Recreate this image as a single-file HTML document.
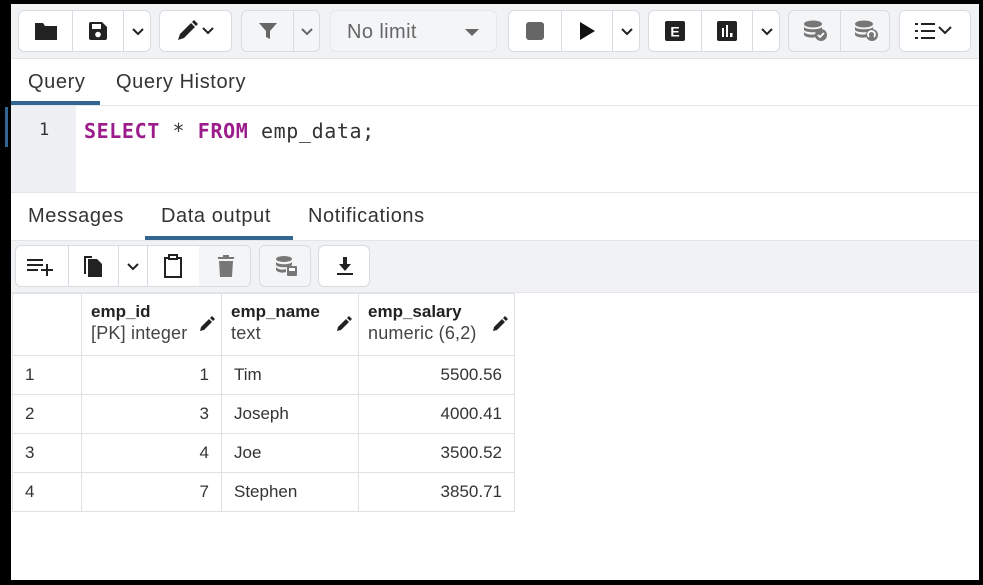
<!DOCTYPE html>
<html><head><meta charset="utf-8"><style>
*{box-sizing:border-box;margin:0;padding:0}
body{width:983px;height:585px;background:#000;position:relative;overflow:hidden;font-family:"Liberation Sans",sans-serif;color:#222}
#app{position:absolute;left:11px;top:4px;width:968px;height:576px;background:#fff}
.abs{position:absolute}
.tb{position:absolute;left:0;top:0;width:968px;height:55px;background:#f1f2f4;border-bottom:1px solid #e2e4e8}
.grp{position:absolute;top:6px;height:42px;border:1px solid #d8dbe0;border-radius:6px;background:#fff;overflow:hidden}
.grp.dis{background:#f4f5f7}
.div{position:absolute;top:0;width:1px;height:100%;background:#d8dbe0}
.ic{position:absolute;top:0;height:100%;display:flex;align-items:center;justify-content:center}
.tab{position:absolute;font-size:20px;color:#333;letter-spacing:0.6px}
td,th{border:1px solid #dfe1e5}
table{border-collapse:collapse;position:absolute;left:1px;top:289px;font-size:17px;color:#333}
th{font-weight:normal;text-align:left;vertical-align:top;height:62px;padding:8px 9px 0;position:relative;background:#fff}
th b{font-weight:bold;font-size:17px;color:#222}
th span{display:block;font-size:18px;color:#444;margin-top:1px;letter-spacing:0.2px}
td{height:39px;padding:0 12px}
.pen{position:absolute;right:6px;top:22px}
</style></head><body><div id="app">
<div class="tb">
 <div class="grp" style="left:7px;width:133px">
  <div class="ic" style="left:0;width:53px"><svg width="24" height="20" viewBox="0 0 24 20"><path d="M1 2h8l2 3h12v14H1z" fill="#222"/></svg></div>
  <div class="div" style="left:53px"></div>
  <div class="ic" style="left:53px;width:51px"><svg width="20" height="20" viewBox="0 0 20 20"><path d="M1 3a2 2 0 0 1 2-2h11l5 5v11a2 2 0 0 1-2 2H3a2 2 0 0 1-2-2z" fill="#222"/><rect x="4" y="3" width="9" height="5" fill="#fff"/><circle cx="10" cy="13.5" r="2.8" fill="#fff"/></svg></div>
  <div class="div" style="left:104px"></div>
  <div class="ic" style="left:104px;width:29px"><svg width="14" height="9" viewBox="0 0 14 9"><path d="M2 2l5 5 5-5" stroke="#222" stroke-width="2" fill="none"/></svg></div>
 </div>
 <div class="grp" style="left:148px;width:73px">
  <div class="ic" style="left:0;width:73px"><svg width="44" height="22" viewBox="0 0 44 22"><path d="M3 20l2-6 11-11 4 4-11 11z" fill="#222"/><path d="M17 2l2-2 4 4-2 2z" fill="#222"/><path d="M28 8l5 5 5-5" stroke="#222" stroke-width="2" fill="none"/></svg></div>
 </div>
 <div class="grp dis" style="left:230px;width:79px">
  <div class="ic" style="left:0;width:51px"><svg width="20" height="20" viewBox="0 0 20 20"><path d="M1 2h18l-7 8v8l-4-2v-6z" fill="#666"/></svg></div>
  <div class="div" style="left:51px"></div>
  <div class="ic" style="left:51px;width:28px"><svg width="14" height="9" viewBox="0 0 14 9"><path d="M2 2l5 5 5-5" stroke="#666" stroke-width="2" fill="none"/></svg></div>
 </div>
 <div class="grp dis" style="left:319px;width:167px;border-color:#e6e8eb">
  <div class="abs" style="left:16px;top:10px;font-size:20px;color:#666;letter-spacing:0.4px">No limit</div>
  <div class="abs" style="left:134px;top:18px;width:0;height:0;border-left:7px solid transparent;border-right:7px solid transparent;border-top:7px solid #666"></div>
 </div>
 <div class="grp" style="left:497px;width:132px">
  <div class="ic" style="left:0;width:52px"><div style="width:18px;height:18px;background:#666;border-radius:3px"></div></div>
  <div class="div" style="left:52px"></div>
  <div class="ic" style="left:52px;width:51px"><svg width="18" height="20" viewBox="0 0 18 20"><path d="M2 1l15 9-15 9z" fill="#111"/></svg></div>
  <div class="div" style="left:103px"></div>
  <div class="ic" style="left:103px;width:29px"><svg width="14" height="9" viewBox="0 0 14 9"><path d="M2 2l5 5 5-5" stroke="#222" stroke-width="2" fill="none"/></svg></div>
 </div>
 <div class="grp" style="left:637px;width:132px">
  <div class="ic" style="left:0;width:52px"><svg width="20" height="20" viewBox="0 0 20 20"><rect width="20" height="20" rx="2" fill="#222"/><text x="10" y="15.5" font-size="14" font-weight="bold" fill="#fff" text-anchor="middle" font-family="Liberation Sans">E</text></svg></div>
  <div class="div" style="left:52px"></div>
  <div class="ic" style="left:52px;width:51px"><svg width="20" height="20" viewBox="0 0 20 20"><rect width="20" height="20" rx="2" fill="#222"/><rect x="5" y="7" width="2" height="9" fill="#fff"/><rect x="9" y="4" width="2" height="12" fill="#fff"/><rect x="13" y="12" width="2.5" height="4" fill="#fff"/></svg></div>
  <div class="div" style="left:103px"></div>
  <div class="ic" style="left:103px;width:29px"><svg width="14" height="9" viewBox="0 0 14 9"><path d="M2 2l5 5 5-5" stroke="#222" stroke-width="2" fill="none"/></svg></div>
 </div>
 <div class="grp dis" style="left:777px;width:102px">
  <div class="ic" style="left:0;width:51px"><svg width="26" height="22" viewBox="0 0 26 22"><ellipse cx="11" cy="4" rx="9" ry="3.5" fill="#777"/><path d="M2 7c2 3 16 3 18 0v3c-2 3-16 3-18 0zM2 12c2 3 10 3 12 2v3c-2 1-10 1-12-2z" fill="#777"/><circle cx="19" cy="15" r="6" fill="#777"/><path d="M16 15l2 2 4-4" stroke="#fff" stroke-width="1.8" fill="none"/></svg></div>
  <div class="div" style="left:51px"></div>
  <div class="ic" style="left:51px;width:51px"><svg width="26" height="22" viewBox="0 0 26 22"><ellipse cx="11" cy="4" rx="9" ry="3.5" fill="#777"/><path d="M2 7c2 3 16 3 18 0v3c-2 3-16 3-18 0zM2 12c2 3 10 3 12 2v3c-2 1-10 1-12-2z" fill="#777"/><circle cx="19" cy="15" r="6" fill="#777"/><path d="M16 17a3.5 3.5 0 1 1 5 0" stroke="#fff" stroke-width="1.8" fill="none"/></svg></div>
 </div>
 <div class="grp" style="left:888px;width:72px">
  <div class="ic" style="left:0;width:72px"><svg width="42" height="20" viewBox="0 0 42 20"><g fill="#222"><rect x="0" y="2" width="3" height="2"/><rect x="0" y="9" width="3" height="2"/><rect x="0" y="16" width="3" height="2"/><rect x="6" y="2" width="14" height="2"/><rect x="6" y="9" width="14" height="2"/><rect x="6" y="16" width="14" height="2"/></g><path d="M24 6l6 6 6-6" stroke="#222" stroke-width="2" fill="none"/></svg></div>
 </div>
</div>
<div class="tab" style="left:17px;top:67px">Query</div>
<div class="tab" style="left:105px;top:67px">Query History</div>
<div class="abs" style="left:0;top:97px;width:89px;height:4px;background:#326690"></div>
<div class="abs" style="left:0;top:101px;width:968px;height:1px;background:#e3e5e8"></div>
<div class="abs" style="left:0;top:102px;width:65px;height:86px;background:#eef0f3"></div>
<div class="abs" style="left:-6px;top:103px;width:3px;height:40px;background:#326690"></div>
<div class="abs" style="left:28px;top:116px;font-family:'DejaVu Sans Mono',monospace;font-size:17px;color:#333">1</div>
<div class="abs" style="left:73px;top:115px;font-family:'DejaVu Sans Mono',monospace;font-size:20px;letter-spacing:0.6px;color:#333;white-space:pre"><span style="color:#9b1c8a;font-weight:bold">SELECT</span> * <span style="color:#9b1c8a;font-weight:bold">FROM</span> emp_data;</div>
<div class="abs" style="left:0;top:188px;width:968px;height:1px;background:#e3e5e8"></div>
<div class="tab" style="left:17px;top:201px">Messages</div>
<div class="tab" style="left:150px;top:201px">Data output</div>
<div class="tab" style="left:297px;top:201px">Notifications</div>
<div class="abs" style="left:134px;top:232px;width:148px;height:4px;background:#326690"></div>
<div class="abs" style="left:0;top:236px;width:968px;height:53px;background:#f1f2f4;border-top:1px solid #e3e5e8;border-bottom:1px solid #e3e5e8"></div>
<div class="grp" style="left:4px;top:241px;height:42px;width:236px">
 <div class="ic" style="left:0;width:52px"><svg width="30" height="20" viewBox="0 0 30 20"><g fill="#222"><rect x="0" y="3" width="16" height="2"/><rect x="0" y="8" width="16" height="2"/><rect x="0" y="13" width="11" height="2"/><rect x="14" y="13" width="12" height="2"/><rect x="19" y="8" width="2" height="12"/></g></svg></div>
 <div class="div" style="left:52px"></div>
 <div class="ic" style="left:52px;width:50px"><svg width="22" height="24" viewBox="0 0 22 24"><path d="M2 2h8v2H4v16H2z" fill="#222"/><path d="M6 5h9l5 5v13H6z" fill="#222"/></svg></div>
 <div class="div" style="left:102px"></div>
 <div class="ic" style="left:102px;width:29px"><svg width="14" height="9" viewBox="0 0 14 9"><path d="M2 2l5 5 5-5" stroke="#222" stroke-width="2" fill="none"/></svg></div>
 <div class="div" style="left:131px"></div>
 <div class="ic" style="left:131px;width:52px"><svg width="22" height="26" viewBox="0 0 22 26"><path d="M2 4h5v2H4v17h14V6h-3V4h5v21H2z" fill="#222"/><rect x="7" y="2" width="8" height="4" fill="none" stroke="#222" stroke-width="2"/></svg></div>
 <div class="div" style="left:183px"></div>
 <div class="ic" style="left:183px;width:53px;background:#f4f5f7"><svg width="16" height="22" viewBox="0 0 16 22"><rect x="0" y="2" width="16" height="2" fill="#777"/><rect x="5" y="0" width="6" height="2" fill="#777"/><path d="M1 6h14l-1 16H2z" fill="#777"/></svg></div>
</div>
<div class="grp dis" style="left:248px;top:241px;height:42px;width:52px">
 <div class="ic" style="left:0;width:52px"><svg width="24" height="22" viewBox="0 0 24 22"><ellipse cx="10" cy="4" rx="8" ry="3" fill="#777"/><path d="M2 7c2 3 14 3 16 0v3c-2 3-14 3-16 0zM2 12c2 3 8 3 10 2v3c-2 1-8 1-10-2z" fill="#777"/><rect x="13" y="11" width="10" height="10" rx="1" fill="#777"/><rect x="15" y="13" width="6" height="3" fill="#fff"/></svg></div>
</div>
<div class="grp" style="left:307px;top:241px;height:42px;width:52px">
 <div class="ic" style="left:0;width:52px"><svg width="18" height="20" viewBox="0 0 18 20"><path d="M7 1h4v7h4l-6 7-6-7h4z" fill="#222"/><rect x="1" y="17" width="16" height="2" fill="#222"/></svg></div>
</div>
<table>
<tr><th style="width:69px"></th>
<th style="width:140px"><b>emp_id</b><span>[PK] integer</span><svg class="pen" width="16" height="16" viewBox="0 0 16 16"><path d="M1 15l1-4 8-8 3 3-8 8zM11 2l2-2 3 3-2 2z" fill="#222"/></svg></th>
<th style="width:137px"><b>emp_name</b><span>text</span><svg class="pen" width="16" height="16" viewBox="0 0 16 16"><path d="M1 15l1-4 8-8 3 3-8 8zM11 2l2-2 3 3-2 2z" fill="#222"/></svg></th>
<th style="width:156px"><b>emp_salary</b><span>numeric (6,2)</span><svg class="pen" width="16" height="16" viewBox="0 0 16 16"><path d="M1 15l1-4 8-8 3 3-8 8zM11 2l2-2 3 3-2 2z" fill="#222"/></svg></th></tr>
<tr><td>1</td><td style="text-align:right">1</td><td>Tim</td><td style="text-align:right">5500.56</td></tr>
<tr><td>2</td><td style="text-align:right">3</td><td>Joseph</td><td style="text-align:right">4000.41</td></tr>
<tr><td>3</td><td style="text-align:right">4</td><td>Joe</td><td style="text-align:right">3500.52</td></tr>
<tr><td>4</td><td style="text-align:right">7</td><td>Stephen</td><td style="text-align:right">3850.71</td></tr>
</table>
</div></body></html>
